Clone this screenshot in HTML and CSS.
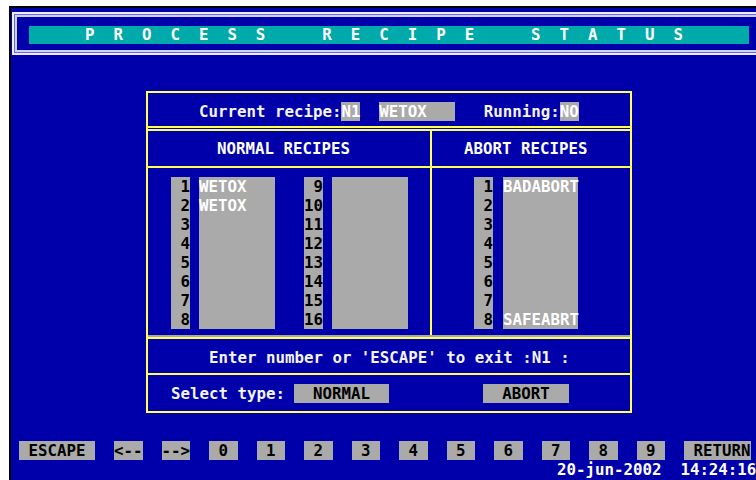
FILE: index.html
```html
<!DOCTYPE html>
<html lang="en">
<head>
<meta charset="utf-8">
<title>Process Recipe Status</title>
<link rel="stylesheet" href="styles.css">
</head>
<body>
<div class="screen">
  <header class="title-frame">
    <div class="title-inner">
      <h1 class="title-bar">P  R  O  C  E  S  S      R  E  C  I  P  E      S  T  A  T  U  S</h1>
    </div>
  </header>

  <main class="panel">
    <div class="panel-head">Current recipe:<span class="val">N1</span>  <span class="val">WETOX   </span>   Running:<span class="val">NO</span></div>
    <div class="rule-double"></div>

    <div class="columns">
      <section class="col col-normal">
        <h2 class="col-title">NORMAL RECIPES</h2>
        <div class="col-body">
          <div class="group">
            <ul class="nums"><li>1</li><li>2</li><li>3</li><li>4</li><li>5</li><li>6</li><li>7</li><li>8</li></ul>
            <ul class="names"><li>WETOX</li><li>WETOX</li><li></li><li></li><li></li><li></li><li></li><li></li></ul>
          </div>
          <div class="group">
            <ul class="nums"><li>9</li><li>10</li><li>11</li><li>12</li><li>13</li><li>14</li><li>15</li><li>16</li></ul>
            <ul class="names"><li></li><li></li><li></li><li></li><li></li><li></li><li></li><li></li></ul>
          </div>
        </div>
      </section>
      <section class="col col-abort">
        <h2 class="col-title">ABORT RECIPES</h2>
        <div class="col-body">
          <div class="group">
            <ul class="nums"><li>1</li><li>2</li><li>3</li><li>4</li><li>5</li><li>6</li><li>7</li><li>8</li></ul>
            <ul class="names"><li>BADABORT</li><li></li><li></li><li></li><li></li><li></li><li></li><li>SAFEABRT</li></ul>
          </div>
        </div>
      </section>
    </div>

    <div class="rule-gray"></div>
    <div class="prompt">Enter number or 'ESCAPE' to exit :N1 :</div>
    <div class="select-row">
      <span class="select-label">Select type:</span>
      <span class="btn btn-normal">NORMAL</span>
      <span class="btn btn-abort">ABORT</span>
    </div>
  </main>

  <nav class="keys">
    <span class="key key-wide">ESCAPE</span>
    <span class="key">&lt;--</span>
    <span class="key">--&gt;</span>
    <span class="key">0</span>
    <span class="key">1</span>
    <span class="key">2</span>
    <span class="key">3</span>
    <span class="key">4</span>
    <span class="key">5</span>
    <span class="key">6</span>
    <span class="key">7</span>
    <span class="key">8</span>
    <span class="key">9</span>
    <span class="key key-return">RETURN</span>
  </nav>
  <div class="clock">20-jun-2002  14:24:16</div>
</div>
</body>
</html>
```
FILE: styles.css
```css
html, body {
  margin: 0;
  padding: 0;
  background: #ffffff;
  overflow: hidden;
}

body {
  font-family: "DejaVu Sans Mono", "Liberation Mono", monospace;
  font-weight: bold;
  font-size: 15.78px;
  line-height: 19px;
}

/* text-mode screen */
.screen {
  margin: 6px 0 0 9px;
  height: 474px;
  border-top: 2px solid #000;
  border-left: 2px solid #000;
  background: #0000aa;
  color: #ffffff;
  overflow: hidden;
}

/* double-lined title frame */
.title-frame {
  margin: 4px 0 0 1px;
  width: 780px;
  border: 2px solid #ececff;
  border-right: 0;
  padding: 1px 0 1px 1px;
  background: #6a6ae0;
}

.title-inner {
  border: 2px solid #d0d0ff;
  border-right: 0;
  background: #0000aa;
  padding: 9px 0 6px 12px;
}

.title-bar {
  margin: 0;
  font: inherit;
  width: 720px;
  height: 18px;
  line-height: 18px;
  box-sizing: border-box;
  padding-left: 56px;
  background: #00aaaa;
  color: #ffffff;
  white-space: pre;
}

/* main yellow-framed panel */
.panel {
  margin: 36px 0 0 135px;
  width: 486px;
  box-sizing: border-box;
  border: 2px solid #ffff55;
}

.panel-head {
  height: 33px;
  box-sizing: border-box;
  padding: 9px 0 0 51px;
  white-space: pre;
  color: #f4f4f4;
}

.val {
  display: inline-block;
  height: 19px;
  background: #aaaaaa;
  color: #ffffff;
  white-space: pre;
}

.rule-double {
  height: 1px;
  border-top: 2px solid #ffff55;
  border-bottom: 2px solid #ffff55;
}

.columns {
  display: flex;
}

.col-normal {
  width: 282px;
  border-right: 2px solid #ffff55;
}

.col-abort {
  width: 198px;
}

.col-title {
  margin: 0;
  font: inherit;
  height: 35px;
  line-height: 35px;
  padding-left: 69px;
  border-bottom: 2px solid #ffff55;
  color: #ffffff;
}

.col-abort .col-title {
  padding-left: 32px;
}

.col-body {
  height: 167px;
  box-sizing: border-box;
  padding: 9px 0 0 23px;
  display: flex;
  align-items: flex-start;
  gap: 29px;
}

.col-abort .col-body {
  padding-left: 42px;
}

.group {
  display: flex;
  align-items: flex-start;
  gap: 9px;
}

.col-abort .group {
  gap: 10px;
}

.nums,
.names {
  margin: 0;
  padding: 0;
  list-style: none;
  background: #aaaaaa;
}

.nums li,
.names li {
  height: 19px;
}

.nums {
  width: 19px;
  text-align: right;
  color: #000000;
}

.names {
  width: 76px;
  color: #ffffff;
}

.col-abort .names {
  width: 75px;
}

.rule-gray {
  height: 2px;
  background: #a8a8a8;
  border-bottom: 2px solid #ffff55;
}

.prompt {
  height: 36px;
  box-sizing: border-box;
  padding: 9px 0 0 61px;
  border-bottom: 2px solid #ffff55;
  white-space: pre;
  color: #f4f4f4;
}

.select-row {
  height: 36px;
  box-sizing: border-box;
  padding: 9px 0 0 23px;
  display: flex;
  align-items: flex-start;
}

.select-label {
  width: 123px;
  color: #f4f4f4;
}

.btn {
  height: 19px;
  background: #aaaaaa;
  color: #000000;
  text-align: center;
}

.btn-normal {
  width: 95px;
}

.btn-abort {
  width: 86px;
  margin-left: 94px;
}

/* function key strip */
.keys {
  margin: 28px 0 0 8px;
  display: flex;
  gap: 19px;
  height: 19px;
}

.key {
  flex: none;
  width: 28.5px;
  height: 19px;
  background: #aaaaaa;
  color: #000000;
  text-align: center;
  white-space: pre;
}

.key-wide {
  width: 76px;
}

.key-return {
  width: 66.5px;
  box-sizing: border-box;
  padding-left: 9.5px;
  text-align: left;
}

.clock {
  height: 19px;
  padding-left: 546px;
  white-space: pre;
  color: #ffffff;
}
```
